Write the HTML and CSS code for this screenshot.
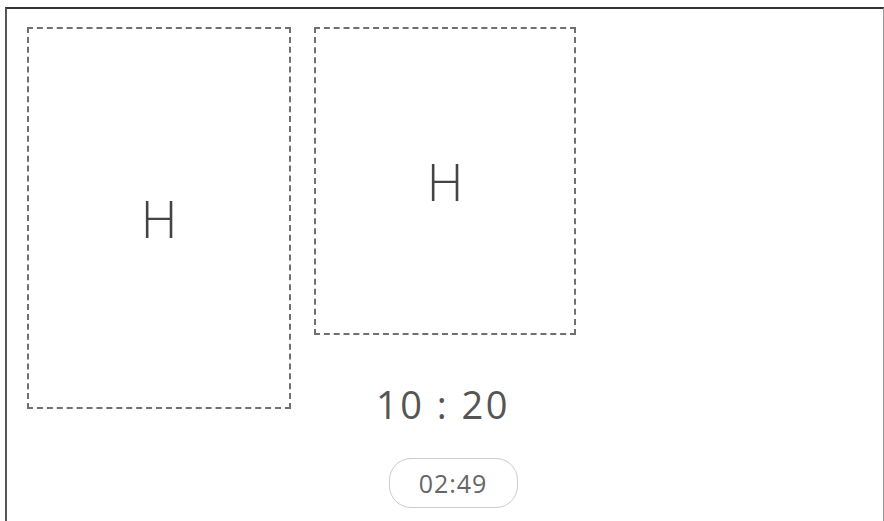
FILE: index.html
```html
<!DOCTYPE html>
<html>
<head>
    <title>Timer</title>
    <link rel="stylesheet" href="styles.css">
</head>
<body>
    <div class="frame">
        <div class="slot slot-tall">
            <span class="slot-label">H</span>
        </div>
        <div class="side">
            <div class="slot slot-short">
                <span class="slot-label">H</span>
            </div>
            <div class="clock">10 : 20</div>
            <div class="countdown">02:49</div>
        </div>
    </div>
</body>
</html>
```

FILE: styles.css
```css
body {
    margin: 0;
    background: #fff;
    font-family: "Open Sans", "Liberation Sans", sans-serif;
    overflow: hidden;
}
.frame {
    margin: 7px 0 0 5px;
    height: 494px;
    border-top: 2px solid #333;
    border-left: 2px solid #555;
    border-right: 1px solid #999;
    padding: 18px 0 0 20px;
    display: flex;
    gap: 23px;
}
.slot {
    box-sizing: border-box;
    border: 2px dashed #707070;
    display: flex;
    align-items: center;
    justify-content: center;
}
.slot-tall {
    width: 264px;
    height: 382px;
}
.slot-short {
    width: 262px;
    height: 308px;
}
.slot-label {
    font-size: 51px;
    font-weight: 300;
    color: #444;
}
.side {
    display: flex;
    flex-direction: column;
    align-items: center;
}
.clock {
    margin-top: 43px;
    font-size: 38px;
    font-weight: 400;
    color: #555;
    letter-spacing: 2.5px;
    margin-right: 4px;
}
.countdown {
    margin-top: 28px;
    box-sizing: border-box;
    width: 129px;
    height: 50px;
    border: 1px solid #ccc;
    border-radius: 22px;
    display: flex;
    align-items: center;
    justify-content: center;
    font-size: 25px;
    font-weight: 400;
    letter-spacing: 1px;
    color: #666;
    margin-left: 16px;
}
```
